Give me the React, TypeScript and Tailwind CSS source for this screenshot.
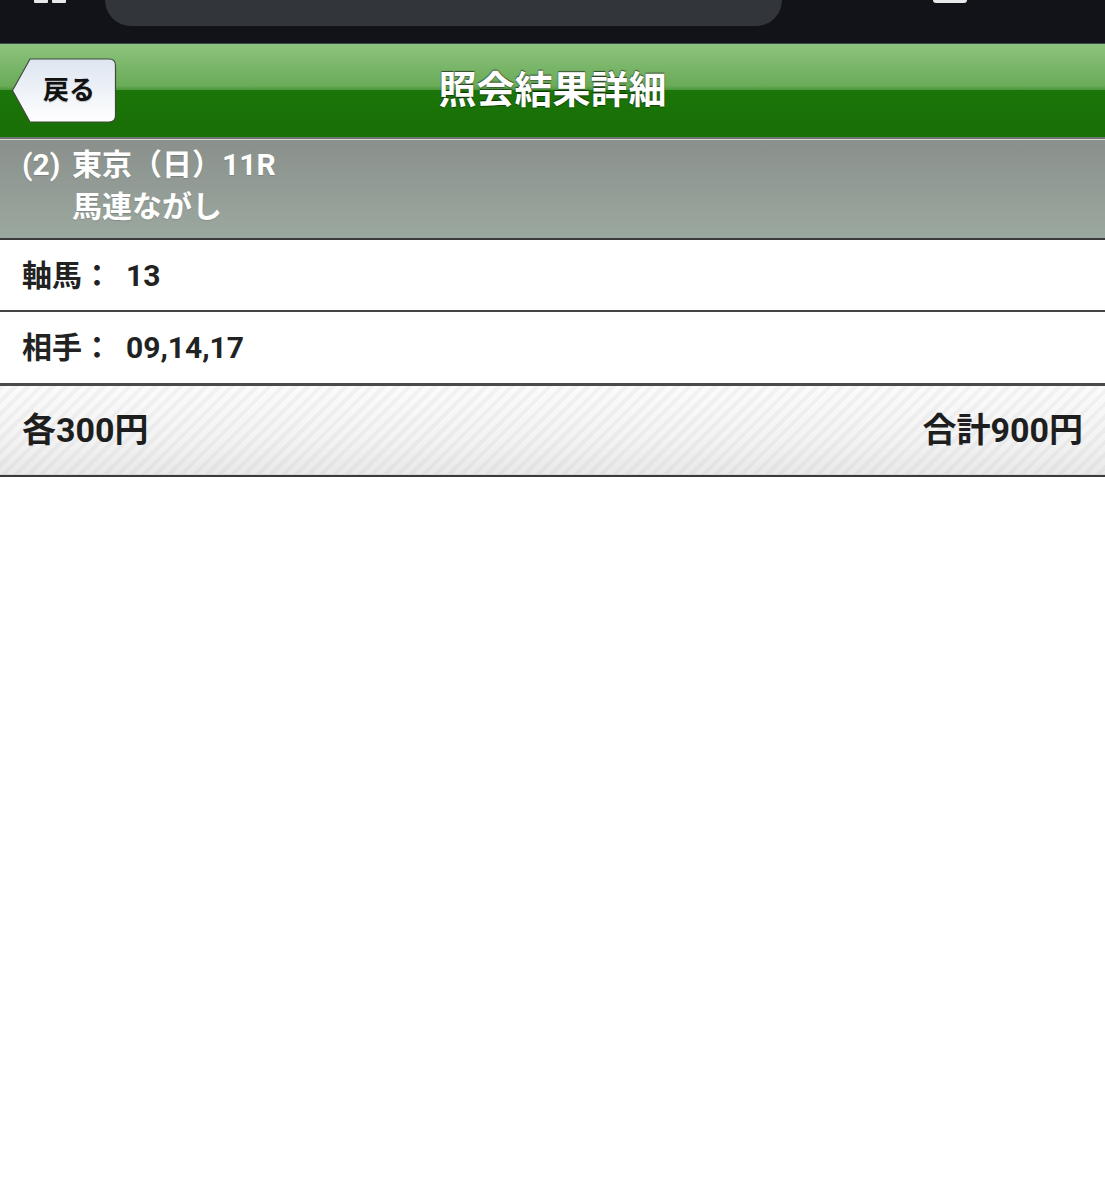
import React from "react";

const font = "font-['Roboto','Noto_Sans_CJK_JP',sans-serif]";

function BackButton() {
  return (
    <div className="absolute left-[11px] top-[14px] h-[65px] w-[106px]">
      <svg className="absolute inset-0" width="106" height="65" viewBox="0 0 106 65">
        <defs>
          <linearGradient id="bb" x1="0" y1="0" x2="0" y2="1">
            <stop offset="0" stopColor="#dde5f0" />
            <stop offset="1" stopColor="#ffffff" />
          </linearGradient>
        </defs>
        <path
          d="M1.5 32.5 L19 1 H98 Q104.5 1 104.5 7.5 V57.5 Q104.5 64 98 64 H19 Z"
          fill="url(#bb)"
          stroke="#3f4a3a"
          strokeWidth="1.2"
        />
      </svg>
      <span
        className={`relative flex h-full items-center pl-[32px] text-[26px] font-bold text-[#111] ${font} [text-shadow:0_1px_1px_rgba(0,0,0,0.25)]`}
      >
        戻る
      </span>
    </div>
  );
}

export default function App() {
  return (
    <div className={`min-h-[1200px] w-full bg-white ${font}`}>
      {/* browser chrome remnant */}
      <div className="relative h-[43px] bg-[#121318]">
        <div className="absolute left-[105px] top-0 h-[26px] w-[677px] rounded-b-[26px] bg-[#323539]" />
        <div className="absolute left-[34px] top-0 flex gap-[4px]">
          <div className="h-[3px] w-[14px] rounded-b-[1px] bg-[#e8e8e8]" />
          <div className="h-[3px] w-[14px] rounded-b-[1px] bg-[#e8e8e8]" />
        </div>
        <div className="absolute left-[933px] top-0 h-[3px] w-[34px] rounded-b-[3px] bg-[#e8e8e8]" />
      </div>
      <div className="h-px bg-[#3c4a48]" />

      {/* green header */}
      <div className="relative flex h-[93px] items-center justify-center bg-[linear-gradient(to_bottom,#8dc37e_0%,#6aab58_45%,#4f9a3e_49%,#1b7508_50%,#186f06_100%)]">
        <BackButton />
        <h1 className="text-[38px] font-bold text-white [text-shadow:0_-1px_1px_rgba(0,0,0,0.6),0_1px_1px_rgba(0,0,0,0.4)]">
          照会結果詳細
        </h1>
      </div>
      <div className="h-[2px] bg-[#6d7570]" />
      <div className="h-px bg-[#d4d8d4]" />

      {/* gray race info */}
      <div className="bg-[linear-gradient(to_bottom,#8a908c,#9ba89f)] pb-[10px] pt-[4px] pl-[22px] text-[30px] font-bold leading-[42px] text-white [text-shadow:0_1px_1px_rgba(0,0,0,0.15)]">
        <div className="flex">
          <span className="w-[50px]">(2)</span>
          <span>東京（日）11R</span>
        </div>
        <div className="pl-[50px]">馬連ながし</div>
      </div>
      <div className="h-[2px] bg-[#3a3a3a]" />

      {/* rows */}
      <div className="flex h-[70px] items-center pl-[22px] text-[30px] font-bold text-[#222]">
        <span>軸馬：</span>
        <span className="ml-[14px]">13</span>
      </div>
      <div className="h-[2px] bg-[#444]" />
      <div className="flex h-[71px] items-center pl-[22px] text-[30px] font-bold text-[#222]">
        <span>相手：</span>
        <span className="ml-[14px]">09,14,17</span>
      </div>
      <div className="h-[3px] bg-[#4a4a4a]" />

      {/* footer */}
      <div className="relative h-[88px] bg-[linear-gradient(to_bottom,#fbfbfb,#f3f3f3_60%,#e9e9e9)]">
        <div className="absolute inset-0 bg-[repeating-linear-gradient(135deg,rgba(0,0,0,0.035)_0px,rgba(0,0,0,0.035)_4px,transparent_4px,transparent_9px)]" />
        <div className="relative flex h-full items-center justify-between px-[22px] text-[34px] font-bold text-[#1e1e1e]">
          <span>各300円</span>
          <span>合計900円</span>
        </div>
      </div>
      <div className="h-px bg-[#d8d8d8]" />
      <div className="h-[2px] bg-[#3a3a3a]" />
    </div>
  );
}
